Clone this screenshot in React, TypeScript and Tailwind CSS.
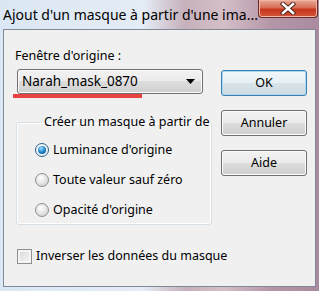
import { type ReactNode } from "react";

const FONT = { fontFamily: '"Noto Sans", "Open Sans", sans-serif' };

function Radio(props: { checked?: boolean; children: ReactNode }) {
  return (
    <div className="flex h-[30px] items-center gap-[4px]">
      <span
        className={`flex h-[14px] w-[14px] items-center justify-center rounded-full border ${
          props.checked
            ? "border-[#2c628b] bg-[radial-gradient(circle_at_40%_35%,#ffffff,#dfe6ec)]"
            : "border-[#8f8f8f] bg-[radial-gradient(circle_at_40%_35%,#ffffff,#c9c9c9)]"
        }`}
      >
        {props.checked ? (
          <span className="h-[8px] w-[8px] rounded-full bg-[radial-gradient(circle_at_40%_30%,#9be0ff,#1a7fc6_55%,#0d4b85)]" />
        ) : null}
      </span>
      <span className="whitespace-nowrap text-[12.5px] leading-none text-black">{props.children}</span>
    </div>
  );
}

function WinButton(props: { primary?: boolean; children: ReactNode }) {
  return (
    <div
      className={`flex h-[26px] w-[86px] items-center justify-center rounded-[3px] border text-[12.5px] text-black ${
        props.primary
          ? "border-[#3c7fb1] bg-[linear-gradient(#f2f8fb,#e6eff4_50%,#d8e3ea_50%,#cfdbe2)] shadow-[inset_0_0_0_1px_#a9d8f0]"
          : "border-[#707070] bg-[linear-gradient(#f2f2f2,#ebebeb_50%,#dddddd_50%,#cfcfcf)] shadow-[inset_0_0_0_1px_#fcfcfc]"
      }`}
    >
      {props.children}
    </div>
  );
}

export default function App(): JSX.Element {
  return (
    <div
      style={FONT}
      className="flex h-[291px] w-[319px] flex-col overflow-hidden bg-[linear-gradient(90deg,#dbe7f4,#e4ecf5_45%,#c6b0bb_58%,#d4bfc8_70%,#b596a8_85%,#a98aa0)]"
    >
      {/* title bar */}
      <div className="flex h-[29px] shrink-0 items-start justify-between">
        <div className="whitespace-nowrap pl-[3px] pt-[5px] text-[14px] leading-[20px] text-black">
          Ajout d'un masque à partir d'une ima...
        </div>
        <div className="mr-[1px] flex h-[18px] w-[60px] shrink-0 items-center justify-center rounded-b-[4px] border border-t-0 border-[#6b2a24] bg-[linear-gradient(#e9a998,#d86d57_45%,#c7361d_55%,#d2543a)] shadow-[inset_0_0_0_1px_#f0b7a8]">
          <svg width="16" height="13" viewBox="0 0 16 13">
            <path
              d="M3 2 L13 11 M13 2 L3 11"
              stroke="#4a2520"
              strokeWidth="4.5"
              strokeLinecap="square"
            />
            <path
              d="M3 2 L13 11 M13 2 L3 11"
              stroke="#ffffff"
              strokeWidth="2.6"
              strokeLinecap="square"
            />
          </svg>
        </div>
      </div>

      {/* client area */}
      <div className="mx-[3px] flex h-[258px] shrink-0 border border-[#7f8a99] bg-[#f0f0f0] pl-[11px] pr-[9px]">
        <div className="flex w-[189px] flex-col">
          <div className="whitespace-nowrap pt-[18px] text-[12.5px] leading-[16px] text-black">Fenêtre d'origine :</div>
          <div className="ml-[2px] mt-[5px] flex h-[25px] w-[186px] items-center justify-between rounded-[3px] border border-[#707070] bg-[linear-gradient(#f2f2f2,#ebebeb_50%,#dddddd_50%,#cfcfcf)] pl-[4px] pr-[7px] shadow-[inset_0_0_0_1px_#fcfcfc]">
            <span className="text-[13.5px] leading-none text-black">Narah_mask_0870</span>
            <svg width="9" height="5" viewBox="0 0 9 5">
              <path d="M0 0 H9 L4.5 5 Z" fill="#000" />
            </svg>
          </div>
          <div className="-ml-[2px] h-[4px] w-[129px] bg-[#e8443f]" />

          <fieldset className="ml-[1px] mt-[16px] h-[111px] w-[186px] rounded-[3px] border border-[#d5dfe5] pl-[18px] shadow-[inset_0_0_0_1px_#ffffff]">
            <legend className="ml-[7px] whitespace-nowrap px-[2px] text-[12.5px] leading-[16px] text-black">
              Créer un masque à partir de
            </legend>
            <div className="mt-[5px] flex flex-col">
              <Radio checked>Luminance d'origine</Radio>
              <Radio>Toute valeur sauf zéro</Radio>
              <Radio>Opacité d'origine</Radio>
            </div>
          </fieldset>

          <div className="ml-[2px] mt-[24px] flex items-center gap-[4px]">
            <span className="h-[15px] w-[15px] shrink-0 border border-[#8e8f8f] bg-[linear-gradient(135deg,#d8d8d8,#f6f6f6)] shadow-[inset_0_0_0_2px_#f4f4f4]" />
            <span className="whitespace-nowrap text-[12.5px] leading-none text-black">Inverser les données du masque</span>
          </div>
        </div>

        <div className="ml-[17px] flex flex-col gap-[14px] pt-[40px]">
          <WinButton primary>OK</WinButton>
          <WinButton>Annuler</WinButton>
          <WinButton>Aide</WinButton>
        </div>
      </div>
    </div>
  );
}
